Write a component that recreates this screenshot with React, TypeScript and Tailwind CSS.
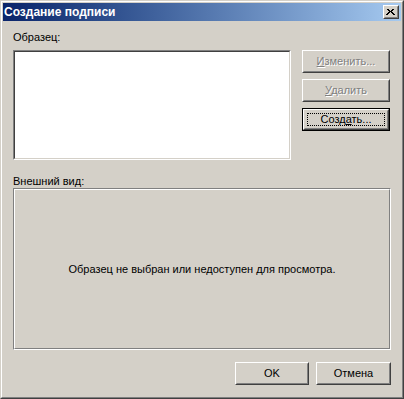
const font = "font-['Tahoma','Liberation_Sans',sans-serif]";

function Raised({ children, className = "" }: { children?: React.ReactNode; className?: string }) {
  return (
    <div className={`border border-t-white border-l-white border-r-[#404040] border-b-[#404040] ${className}`}>
      <div className="h-full w-full border border-t-[#d4d0c8] border-l-[#d4d0c8] border-r-[#808080] border-b-[#808080] bg-[#d4d0c8]">
        {children}
      </div>
    </div>
  );
}

function Button({ children, disabled, isDefault, className = "" }: { children: React.ReactNode; disabled?: boolean; isDefault?: boolean; className?: string }) {
  const label = (
    <div
      className={`flex h-full items-center justify-center text-[11px] ${disabled ? "text-[#808080] [text-shadow:1px_1px_0_#ffffff]" : "text-black"}`}
    >
      {children}
    </div>
  );
  if (isDefault) {
    return (
      <div className={`border border-black ${className}`}>
        <Raised className="h-full">
          <div className="h-full p-[2px]">
            <div className="h-full border border-dotted border-black">{label}</div>
          </div>
        </Raised>
      </div>
    );
  }
  return <Raised className={className}>{label}</Raised>;
}

export default function App() {
  return (
    <div className={`h-[399px] w-[404px] bg-[#d4d0c8] ${font}`}>
      <div className="h-full w-full border border-t-[#d4d0c8] border-l-[#d4d0c8] border-r-[#404040] border-b-[#404040]">
        <div className="flex h-full w-full flex-col border border-t-white border-l-white border-r-[#808080] border-b-[#808080] p-px">
          {/* title bar */}
          <div className="flex h-[18px] items-center justify-between bg-gradient-to-r from-[#0a246a] to-[#a6caf0] pl-px pr-[2px]">
            <span className="text-[12px] font-bold leading-none text-white">Создание подписи</span>
            <Raised className="h-[14px] w-[16px]">
              <svg width="12" height="10" viewBox="0 0 12 10" className="block">
                <path d="M3 2h2v1h1v1h1V3h1V2h2v1H9v1H8v1h1v1h1v1h1v1H9V7H8V6H7V5H6v1H5v1H4v1H2V7h1V6h1V5h1V4H4V3H3z" fill="black" transform="translate(-1 0)" />
              </svg>
            </Raised>
          </div>

          {/* body */}
          <div className="flex flex-1 flex-col px-[10px] pt-[10px] pb-[11px] text-[11px] text-black">
            <div className="flex">
              <div className="w-[278px]">
                <div className="h-[13px] leading-[13px]">Образец:</div>
                <div className="mt-[6px] h-[110px] border border-t-[#808080] border-l-[#808080] border-r-white border-b-white">
                  <div className="h-full w-full border border-t-[#404040] border-l-[#404040] border-r-[#d4d0c8] border-b-[#d4d0c8] bg-white" />
                </div>
              </div>
              <div className="ml-[11px] flex w-[88px] flex-col gap-[6px] pt-[19px]">
                <Button disabled className="h-[23px]">
                  <span><u>И</u>зменить...</span>
                </Button>
                <Button disabled className="h-[23px]">
                  <span><u>У</u>далить</span>
                </Button>
                <Button isDefault className="h-[23px]">
                  <span>Созд<u>а</u>ть...</span>
                </Button>
              </div>
            </div>

            <div className="mt-[15px] h-[13px] leading-[13px]">Внешний вид:</div>
            <div className="h-[162px] border border-t-[#808080] border-l-[#808080] border-r-white border-b-white">
              <div className="flex h-full w-full items-center justify-center border border-t-white border-l-white border-r-[#808080] border-b-[#808080]">
                Образец не выбран или недоступен для просмотра.
              </div>
            </div>

            <div className="mt-auto flex justify-end gap-[7px]">
              <Button className="h-[23px] w-[74px]">OK</Button>
              <Button className="h-[23px] w-[75px]">Отмена</Button>
            </div>
          </div>
        </div>
      </div>
    </div>
  );
}
